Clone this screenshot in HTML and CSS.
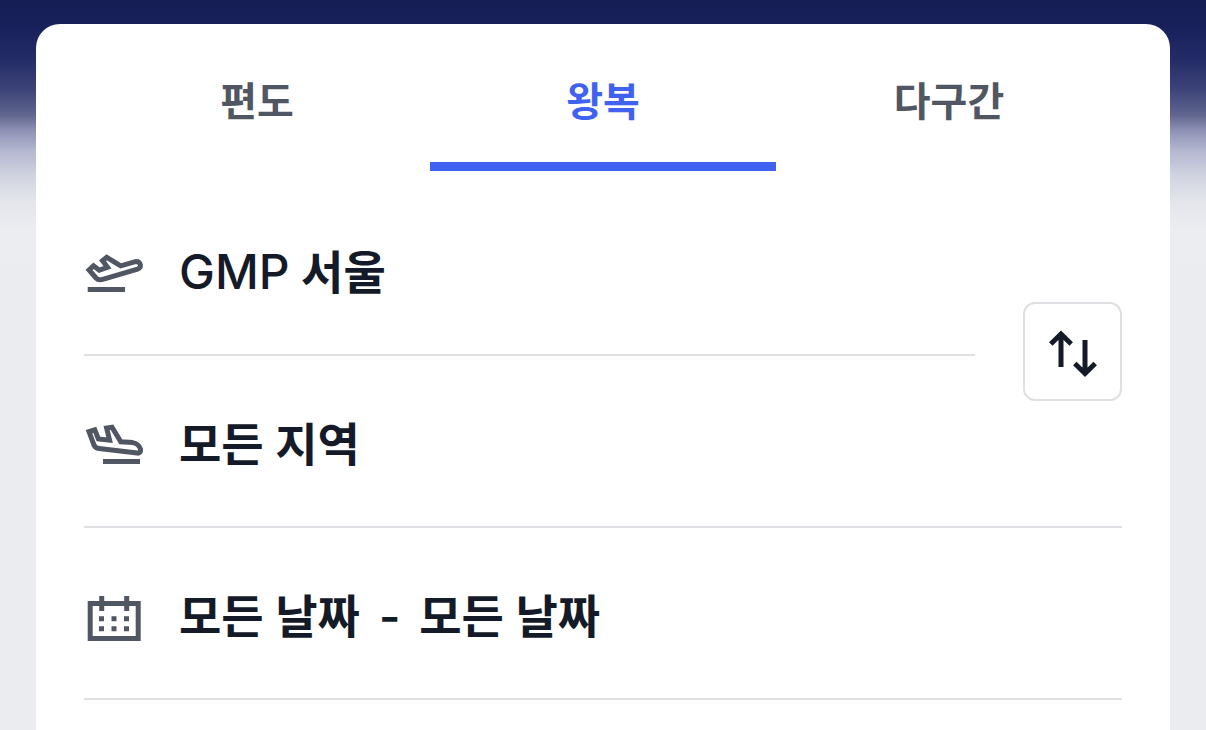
FILE: index.html
```html
<!DOCTYPE html>
<html lang="ko">
<head>
    <meta charset="utf-8">
    <meta name="viewport" content="width=device-width, initial-scale=1">
    <title>항공권 검색</title>
    <link rel="stylesheet" href="styles.css">
</head>
<body>
    <main class="search-card">
        <div class="tabs" role="tablist">
            <button class="tab" type="button" role="tab" aria-selected="false">편도</button>
            <button class="tab active" type="button" role="tab" aria-selected="true">왕복</button>
            <button class="tab" type="button" role="tab" aria-selected="false">다구간</button>
        </div>

        <div class="fields">
            <button class="field field-from" type="button">
                <svg class="icon" viewBox="0 0 60 60" aria-hidden="true">
                    <path d="M5 28 L9.5 23.8 L15.3 28.2 L23.5 25.3 L18.5 18.6 L22.7 15.3 L36.7 23.8 L51.3 19.6 Q55.5 19.3 56.4 22.9 Q56.8 26 53.5 27.1 L18.7 37.4 Q14.4 38.6 12 36 Z"/>
                    <path d="M3.7 47.5 H41"/>
                </svg>
                <span><span class="code">GMP</span> 서울</span>
            </button>

            <button class="field" type="button">
                <svg class="icon" viewBox="0 0 60 60" aria-hidden="true">
                    <path d="M5 17.6 L10.8 15.8 L14.4 25 L25.6 26.2 L22.6 14 L28 13.2 L36.8 27.8 L48.7 28.6 Q54.6 29.6 56.5 35 Q57 39.6 53.3 39.1 L15 34.6 Q11.3 34.2 10 31 Z"/>
                    <path d="M19 47.5 H56"/>
                </svg>
                <span>모든 지역</span>
            </button>

            <!-- swaps departure and arrival -->
            <button class="swap" type="button" aria-label="출발지와 도착지 바꾸기">
                <svg class="icon" viewBox="0 0 60 60" aria-hidden="true">
                    <path d="M18 45 V12 M7.8 22 L18 12 L28.2 22"/>
                    <path d="M42 18 V51 M31.8 41.5 L42 51.5 L52.2 41.5"/>
                </svg>
            </button>

            <button class="field" type="button">
                <svg class="icon" viewBox="0 0 60 60" aria-hidden="true">
                    <path d="M6.2 17.5 H54.2 V52.5 H6.2 Z"/>
                    <path d="M17.7 10 V25 M42.7 10 V25"/>
                    <path d="M15 32.7 H20 M27.5 32.7 H32.5 M40 32.7 H45 M15 42.7 H20 M27.5 42.7 H32.5 M40 42.7 H45"/>
                </svg>
                <span class="dates">
                    <span>모든 날짜</span>
                    <span>-</span>
                    <span>모든 날짜</span>
                </span>
            </button>
        </div>
    </main>
</body>
</html>
```

FILE: styles.css
```css
* {
    box-sizing: border-box;
}

body {
    margin: 0;
    padding: 24px 36px 0;
    min-height: 100vh;
    display: flex;
    font-family: Inter, "Noto Sans CJK KR", sans-serif;
    color: #141a28;
    background: #eaecf0 linear-gradient(#161e56 0, #19215c 28px, #242c68 60px, #3d4479 90px, #60668f 115px, #8d90b3 130px, #b3b6cf 150px, #d0d3e0 175px, #e3e5eb 200px, #ebedf1 230px, #eaecf0 300px) no-repeat;
}

button {
    font: inherit;
    color: inherit;
    background: none;
    border: none;
    padding: 0;
    cursor: pointer;
}

.search-card {
    flex: 1;
    padding: 0 48px;
    background: #fff;
    border-radius: 24px 24px 0 0;
}

.tabs {
    display: grid;
    grid-template-columns: repeat(3, 1fr);
}

.tab {
    height: 147px;
    padding-top: 18px;
    border-bottom: 9px solid transparent;
    font-size: 40px;
    line-height: 48px;
    font-weight: 600;
    color: #515663;
}

.tab.active {
    color: #3f62f0;
    border-bottom-color: #3f62f0;
}

.fields {
    position: relative;
    padding-top: 13px;
}

.field {
    display: flex;
    align-items: center;
    gap: 35px;
    width: 100%;
    height: 172px;
    padding-top: 6px;
    border-bottom: 2px solid #dfe0e3;
    font-size: 46px;
    line-height: 60px;
    font-weight: 600;
    text-align: left;
}

.field-from {
    width: calc(100% - 147px);
}

.code {
    font-size: 48px;
    font-weight: 500;
}

.icon {
    flex: none;
    width: 60px;
    height: 60px;
    fill: none;
    stroke: #515663;
    stroke-width: 5;
}

.dates {
    display: flex;
    gap: 19px;
}

.swap {
    position: absolute;
    top: 131px;
    right: 0;
    display: flex;
    align-items: center;
    justify-content: center;
    width: 99px;
    height: 99px;
    background: #fff;
    border: 2px solid #dfe0e3;
    border-radius: 12px;
}

.swap .icon {
    stroke: #141a28;
}
```
